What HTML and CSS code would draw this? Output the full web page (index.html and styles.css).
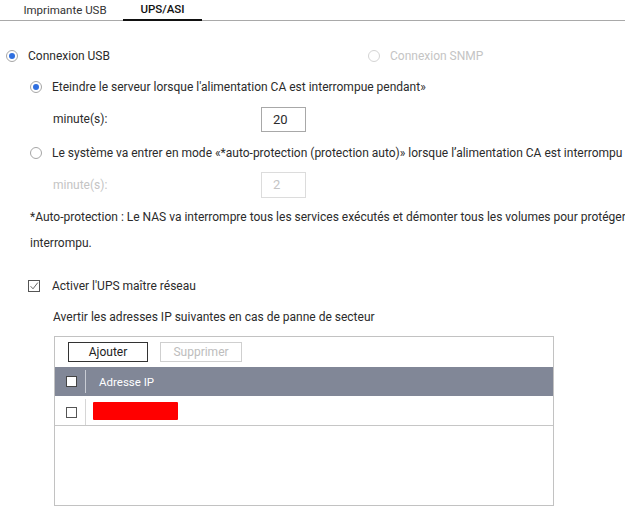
FILE: index.html
```html
<!DOCTYPE html>
<html lang="fr">
<head>
<meta charset="utf-8">
<title>UPS/ASI</title>
<link rel="stylesheet" href="styles.css">
</head>
<body>
<div class="tabs">
  <div class="tab">Imprimante USB</div>
  <div class="tab active">UPS/ASI</div>
</div>
<div class="content">
  <div class="row row-conn">
    <label class="opt usb"><span class="radio checked"></span>Connexion USB</label>
    <label class="opt snmp disabled"><span class="radio"></span>Connexion SNMP</label>
  </div>
  <div class="row row-r2 indent">
    <label class="opt"><span class="radio checked"></span>Eteindre le serveur lorsque l'alimentation CA est interrompue pendant»</label>
  </div>
  <div class="row row-min1 sub">
    <span class="min-label">minute(s):</span>
    <span class="num">20</span>
  </div>
  <div class="row row-r3 indent">
    <label class="opt"><span class="radio"></span>Le système va entrer en mode «*auto-protection (protection auto)» lorsque l’alimentation CA est interrompu pendant»</label>
  </div>
  <div class="row row-min2 sub disabled">
    <span class="min-label">minute(s):</span>
    <span class="num">2</span>
  </div>
  <p class="note">*Auto-protection : Le NAS va interrompre tous les services exécutés et démonter tous les volumes pour protéger les données lorsque le courant est<br>interrompu.</p>
  <div class="row row-chk indent">
    <label class="opt"><span class="check"><svg width="12" height="12" viewBox="0 0 12 12"><rect x="0.5" y="0.5" width="11" height="11" fill="#fff" stroke="#555"/><path d="M2.6 6.2 L5 8.8 L9.8 2.6" fill="none" stroke="#666" stroke-width="1"/></svg></span>Activer l'UPS maître réseau</label>
  </div>
  <div class="row row-warn sub">Avertir les adresses IP suivantes en cas de panne de secteur</div>
  <div class="grid">
    <div class="toolbar">
      <span class="btn">Ajouter</span>
      <span class="btn off">Supprimer</span>
    </div>
    <div class="thead">
      <div class="c-chk"><span class="box"></span></div>
      <div class="c-ip">Adresse IP</div>
    </div>
    <div class="trow">
      <div class="c-chk"><span class="box"></span></div>
      <div class="c-ip"><span class="redact"></span></div>
    </div>
  </div>
</div>
</body>
</html>
```
FILE: styles.css
```css
* { box-sizing: border-box; }
html, body { margin: 0; padding: 0; background: #fff; }
body {
  width: 625px;
  height: 509px;
  overflow: hidden;
  font-family: Roboto, "Noto Sans", sans-serif;
  font-size: 12px;
  color: #2b2b2b;
  white-space: nowrap;
}
.tabs {
  display: flex;
  height: 21px;
  border-bottom: 1px solid #a9a9a9;
  padding-left: 7px;
}
.tab {
  font-size: 11.5px;
  height: 20px;
  line-height: 20px;
  text-align: center;
  color: #333;
}
.tab:first-child { width: 116px; }
.tab.active {
  width: 79px;
  font-weight: 500;
  color: #111;
  border-bottom: 2px solid #111;
  line-height: 19px;
  height: 21px;
}
.row {
  display: flex;
  align-items: center;
  height: 26px;
}
.opt {
  display: flex;
  align-items: center;
}
.radio {
  display: inline-block;
  width: 12px;
  height: 12px;
  border: 1px solid #a6a6a6;
  border-radius: 50%;
  margin-right: 10px;
  position: relative;
  background: #fff;
}
.radio.checked::after {
  content: "";
  position: absolute;
  left: 2px;
  top: 2px;
  width: 6px;
  height: 6px;
  border-radius: 50%;
  background: #2f6fe0;
}
.disabled { color: #c4c4c4; }
.disabled .radio { border-color: #d4d4d4; }
.row-conn { margin-top: 22px; padding-left: 6px; }
.usb { width: 362px; }
.indent { padding-left: 30px; }
.sub { padding-left: 53px; }
.row-r2 { margin-top: 5px; }
.row-min1 { margin-top: 6px; }
.row-r3 { margin-top: 8px; }
.row-min2 { margin-top: 5px; height: 27px; }
.min-label { width: 208px; }
.num {
  width: 45px;
  height: 25px;
  border: 1px solid #a8a8a8;
  padding-left: 11px;
  line-height: 23px;
  font-size: 13px;
}
.row-min2 .num { border-color: #dcdcdc; height: 26px; }
.note {
  margin: 6px 0 0 0;
  padding-left: 30px;
  line-height: 26px;
}
.row-chk { margin-top: 17px; padding-left: 28px; }
.check { display: inline-flex; margin-right: 12px; }
.row-warn { margin-top: 5px; }
.grid {
  margin: 6px 0 0 54px;
  width: 500px;
  height: 170px;
  border: 1px solid #c2c2c2;
}
.toolbar {
  display: flex;
  gap: 12px;
  padding: 5px 0 0 13px;
  height: 30px;
}
.btn {
  width: 80px;
  height: 20px;
  border: 1px solid #333;
  text-align: center;
  line-height: 18px;
  color: #222;
}
.btn.off {
  width: 82px;
  border-color: #cfcfcf;
  color: #bdbdbd;
}
.thead, .trow {
  display: flex;
  height: 29px;
  align-items: stretch;
}
.thead {
  background: #818797;
  color: #fff;
  font-size: 11.5px;
}
.trow { border-bottom: 1px solid #c6c6c6; height: 30px; }
.c-chk {
  width: 31px;
  display: flex;
  align-items: center;
  justify-content: center;
  padding-left: 2px;
}
.thead .c-chk { border-right: 1px solid #c9ccd4; margin: 3px 0; }
.trow .c-chk { border-right: 1px solid #d6d6d6; margin: 3px 0 0 0; }
.box {
  width: 11px;
  height: 11px;
  background: #fff;
  border: 1px solid #444;
}
.trow .box { border-color: #555; }
.c-ip {
  display: flex;
  align-items: center;
  padding-left: 13px;
}
.trow .c-ip { padding-left: 7px; }
.redact {
  display: block;
  width: 85px;
  height: 18px;
  background: #ff0000;
  border-radius: 1px;
}
```
